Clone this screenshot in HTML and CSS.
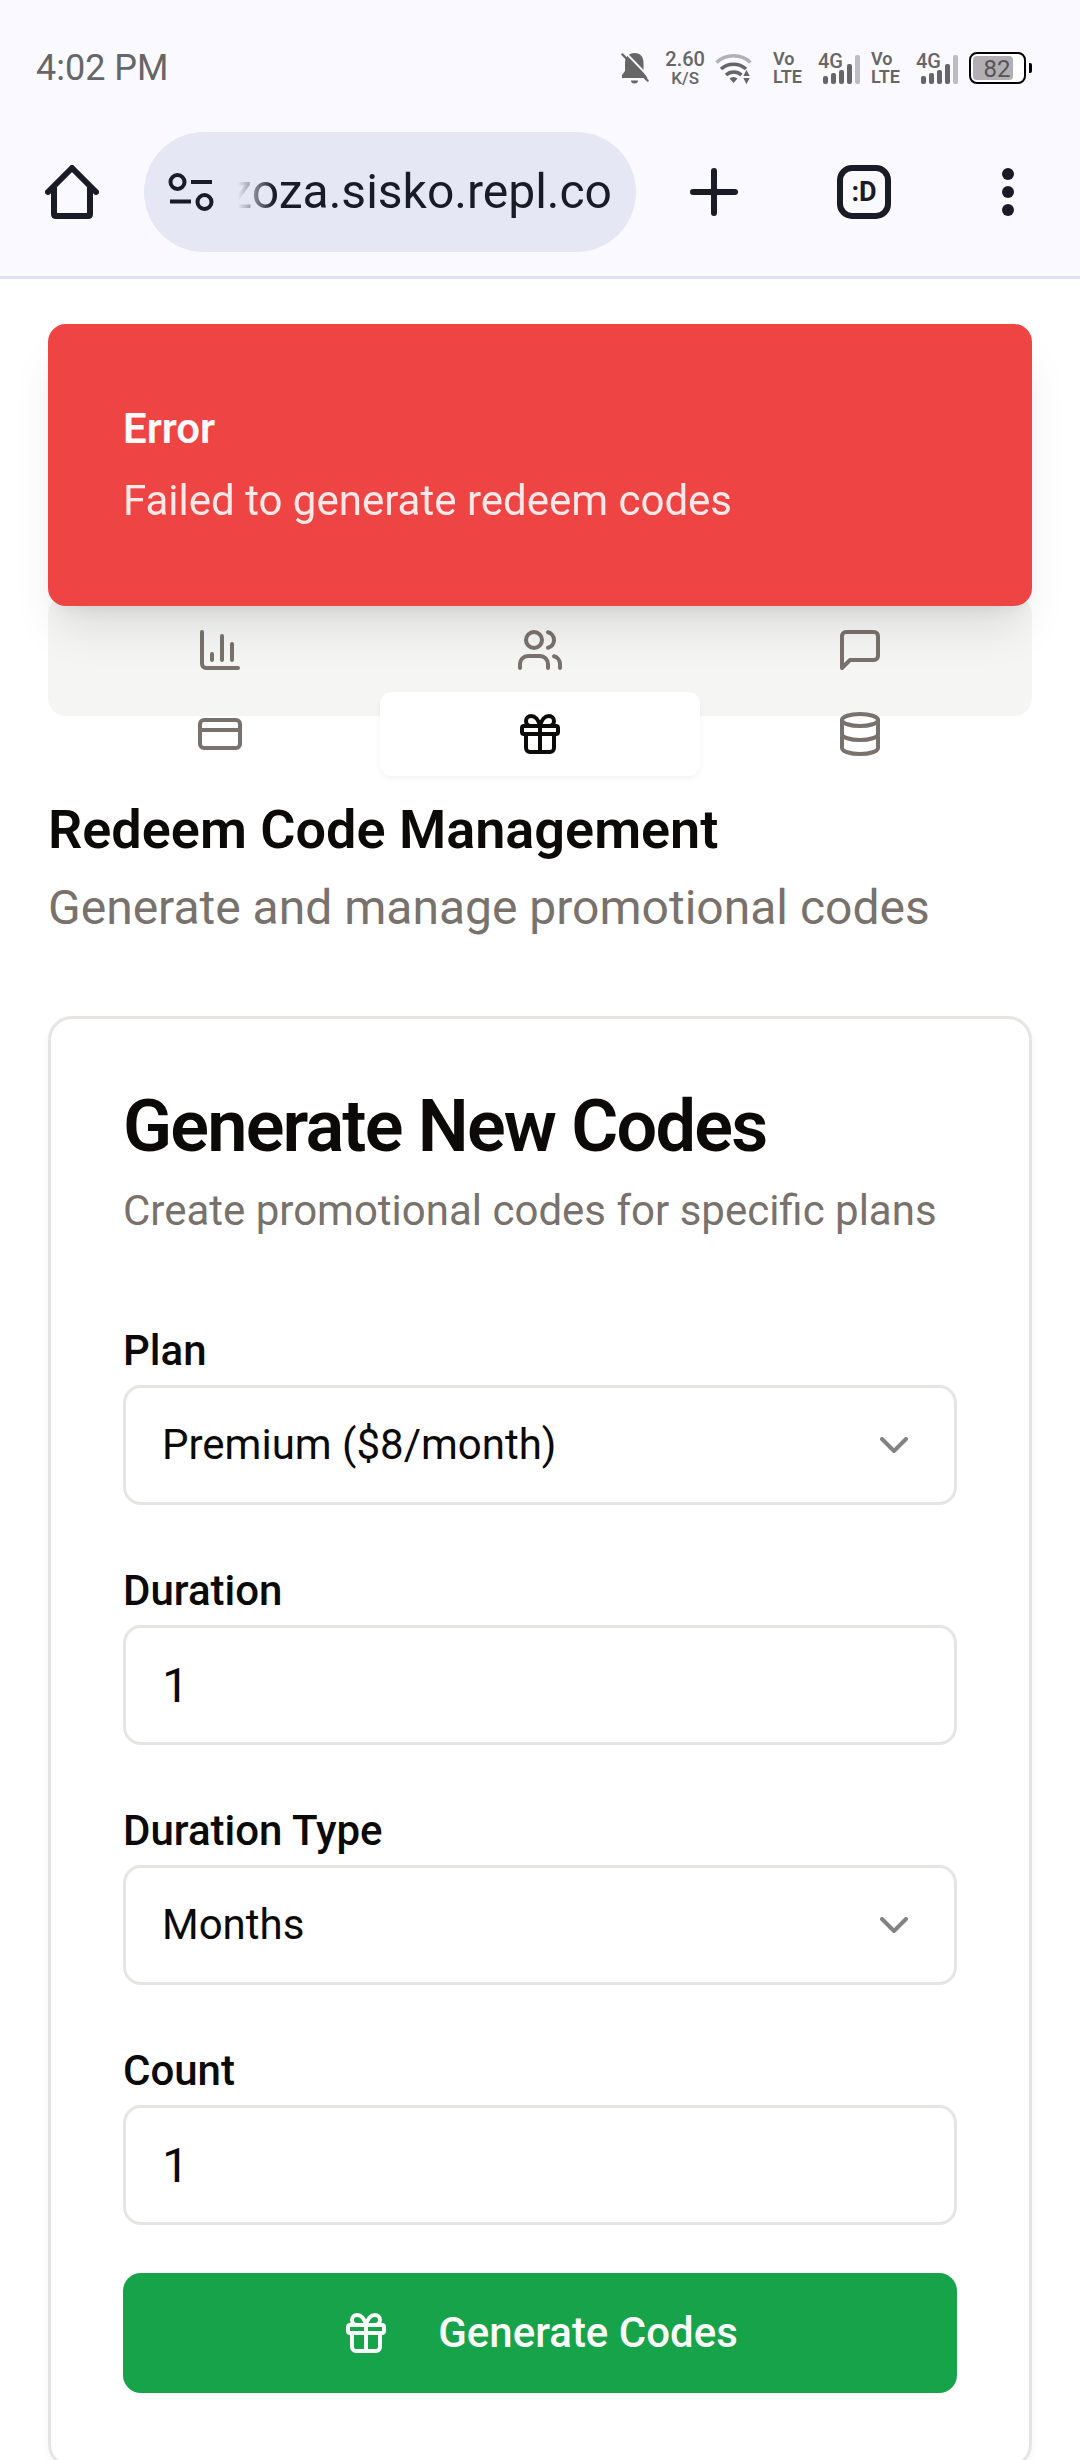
FILE: index.html
```html
<!DOCTYPE html>
<html lang="en">
<head>
<meta charset="utf-8">
<meta name="viewport" content="width=device-width, initial-scale=1">
<title>Redeem Code Management</title>
<link rel="stylesheet" href="styles.css">
</head>
<body>
<div class="screen">
  <header class="browser">
    <div class="status">
      <time class="clock">4:02 PM</time>
      <div class="status-icons">
        <svg class="bell" width="28" height="34" viewBox="0 0 28 34" fill="#666">
          <path d="M13.500 2c6 0 9 4 9 10v9l4 6H1v-3l3-4v-8c0-6 4-10 9.500-10z"/>
          <path d="M10 29.500h7a3.500 3 0 0 1-7 0z"/>
          <path d="M2 -1L30 28" stroke="#f9f9ff" stroke-width="2"/>
          <path d="M1.500 3.500L26.500 29.500" stroke="#666" stroke-width="2.500" stroke-linecap="round"/>
        </svg>
        <div class="speed"><span class="speed-value">2.60</span><span class="speed-unit">K/S</span></div>
        <svg class="wifi" width="38" height="34" viewBox="0 0 38 34" fill="none" stroke="#666" stroke-width="3.500">
          <path d="M1.500 11.500a25 25 0 0 1 34 0" stroke="#b1b0b6"/>
          <path d="M6 18a18.500 18.500 0 0 1 25 0"/>
          <path d="M11 24a11.500 11.500 0 0 1 15.500 0"/>
          <path d="M14.500 27.500a6 6 0 0 1 8 0L18.500 32z" fill="#666" stroke="none"/>
          <path d="M31.500 18l4 7.500h-8zM31.500 34l4-7.500h-8z" fill="#666" stroke="#f9f9ff" stroke-width="1"/>
        </svg>
        <div class="sim">
          <div class="volte"><span>Vo</span><span>LTE</span></div>
          <svg width="43" height="44" viewBox="0 -5 43 44" fill="#666">
            <text class="network" x="0" y="17">4G</text>
            <rect x="5" y="25" width="5" height="8" rx="2"/><rect x="13" y="22" width="5" height="11" rx="2"/><rect x="21" y="19" width="5" height="14" rx="2"/><rect x="29" y="13" width="5" height="20" rx="2"/><rect x="37" y="4" width="5" height="29" rx="2" fill="#bdbcc3"/>
          </svg>
        </div>
        <div class="sim">
          <div class="volte"><span>Vo</span><span>LTE</span></div>
          <svg width="43" height="44" viewBox="0 -5 43 44" fill="#666">
            <text class="network" x="0" y="17">4G</text>
            <rect x="5" y="25" width="5" height="8" rx="2"/><rect x="13" y="22" width="5" height="11" rx="2"/><rect x="21" y="19" width="5" height="14" rx="2"/><rect x="29" y="13" width="5" height="20" rx="2"/><rect x="37" y="4" width="5" height="29" rx="2" fill="#bdbcc3"/>
          </svg>
        </div>
        <svg width="63" height="34" viewBox="0 0 63 34">
          <rect x="1" y="2" width="55" height="30" rx="7" fill="#fff" stroke="#000" stroke-width="2"/>
          <rect x="4" y="5" width="40" height="24" rx="4" fill="#b1aeb4"/>
          <path d="M60 12h1a2 2 0 0 1 2 2v6a2 2 0 0 1-2 2h-1z"/>
          <text class="charge" x="28" y="26" text-anchor="middle">82</text>
        </svg>
      </div>
    </div>
    <div class="toolbar">
      <button class="tool" type="button" aria-label="Home">
        <svg width="54" height="54" viewBox="0 0 54 54" fill="none" stroke="#191b26" stroke-width="6" stroke-linecap="round" stroke-linejoin="round"><path d="M3 27L27 3l24 24M9 23v26q0 2 2 2h32q2 0 2-2V23"/></svg>
      </button>
      <div class="omnibox">
        <svg width="46" height="38" viewBox="0 0 46 38" fill="none" stroke="#191b26" stroke-width="4"><circle cx="9.500" cy="9" r="7"/><path d="M23 9h21M2 28.500h21"/><circle cx="36.500" cy="29" r="7"/></svg>
        <input class="address" type="text" value="zoza.sisko.repl.co" aria-label="Address">
      </div>
      <button class="tool new-tab" type="button" aria-label="New tab">
        <svg width="48" height="48" viewBox="0 0 48 48" stroke="#191b26" stroke-width="6" stroke-linecap="round"><path d="M24 3v42M3 24h42"/></svg>
      </button>
      <button class="tool" type="button" aria-label="Tabs"><span class="tab-count">:D</span></button>
      <button class="tool" type="button" aria-label="Menu">
        <svg width="12" height="48" viewBox="0 0 12 48" fill="#191b26"><circle cx="6" cy="6" r="6"/><circle cx="6" cy="24" r="6"/><circle cx="6" cy="42" r="6"/></svg>
      </button>
    </div>
  </header>

  <main class="page">
    <div class="toast" role="alert">
      <p class="toast-title">Error</p>
      <p class="toast-text">Failed to generate redeem codes</p>
    </div>

    <div class="tabs" role="tablist">
      <button class="tab" type="button" role="tab" aria-label="Analytics"><svg class="icon" viewBox="0 0 24 24"><path d="M3 3v16a2 2 0 0 0 2 2h16M18 17V9M13 17V5M8 17v-3"/></svg></button>
      <button class="tab" type="button" role="tab" aria-label="Users"><svg class="icon" viewBox="0 0 24 24"><path d="M16 21v-2a4 4 0 0 0-4-4H6a4 4 0 0 0-4 4v2"/><circle cx="9" cy="7" r="4"/><path d="M22 21v-2a4 4 0 0 0-3-3.870M16 3.130a4 4 0 0 1 0 7.750"/></svg></button>
      <button class="tab" type="button" role="tab" aria-label="Messages"><svg class="icon" viewBox="0 0 24 24"><path d="M21 15a2 2 0 0 1-2 2H7l-4 4V5a2 2 0 0 1 2-2h14a2 2 0 0 1 2 2z"/></svg></button>
      <button class="tab" type="button" role="tab" aria-label="Payments"><svg class="icon" viewBox="0 0 24 24"><rect x="2" y="5" width="20" height="14" rx="2"/><path d="M2 10h20"/></svg></button>
      <button class="tab tab-active" type="button" role="tab" aria-selected="true" aria-label="Redeem codes"><svg class="icon" viewBox="0 0 24 24"><rect x="3" y="8" width="18" height="4" rx="1"/><path d="M12 8v13M19 12v7a2 2 0 0 1-2 2H7a2 2 0 0 1-2-2v-7M7.500 8a2.500 2.500 0 0 1 0-5A4.800 8 0 0 1 12 8a4.800 8 0 0 1 4.500-5 2.500 2.500 0 0 1 0 5"/></svg></button>
      <button class="tab" type="button" role="tab" aria-label="Database"><svg class="icon" viewBox="0 0 24 24"><ellipse cx="12" cy="5" rx="9" ry="3"/><path d="M3 5V19A9 3 0 0 0 21 19V5M3 12A9 3 0 0 0 21 12"/></svg></button>
    </div>

    <section class="intro">
      <h1 class="intro-title">Redeem Code Management</h1>
      <p class="intro-text">Generate and manage promotional codes</p>
    </section>

    <section class="card">
      <div class="card-header">
        <h2 class="card-title">Generate New Codes</h2>
        <p class="card-text">Create promotional codes for specific plans</p>
      </div>
      <form class="form">
        <div class="field">
          <label for="plan">Plan</label>
          <div class="select">
            <select class="control" id="plan"><option>Premium ($8/month)</option></select>
            <svg class="icon chevron" viewBox="0 0 24 24"><path d="m6 9 6 6 6-6"/></svg>
          </div>
        </div>
        <div class="field">
          <label for="duration">Duration</label>
          <input class="control control-number" id="duration" type="number" value="1">
        </div>
        <div class="field">
          <label for="duration-type">Duration Type</label>
          <div class="select">
            <select class="control" id="duration-type"><option>Months</option></select>
            <svg class="icon chevron" viewBox="0 0 24 24"><path d="m6 9 6 6 6-6"/></svg>
          </div>
        </div>
        <div class="field">
          <label for="count">Count</label>
          <input class="control control-number" id="count" type="number" value="1">
        </div>
        <button class="submit" type="button">
          <svg class="icon" viewBox="0 0 24 24"><rect x="3" y="8" width="18" height="4" rx="1"/><path d="M12 8v13M19 12v7a2 2 0 0 1-2 2H7a2 2 0 0 1-2-2v-7M7.500 8a2.500 2.500 0 0 1 0-5A4.800 8 0 0 1 12 8a4.800 8 0 0 1 4.500-5 2.500 2.500 0 0 1 0 5"/></svg>
          Generate Codes
        </button>
      </form>
    </section>
  </main>
</div>
</body>
</html>
```
FILE: styles.css
```css
*, *::before, *::after { box-sizing: border-box; }

body, h1, h2, p { margin: 0; }

body {
  font-family: Roboto, "Liberation Sans", sans-serif;
  font-size: 48px;
  line-height: 72px;
  color: #0c0a09;
  background: #fff;
}

button, input, select { font: inherit; color: inherit; margin: 0; }

button { border: 0; padding: 0; background: none; }

svg { display: block; flex: none; }

.screen {
  display: flex;
  flex-direction: column;
  height: 100vh;
}

/* Browser chrome */

.browser {
  flex: none;
  background: #f9f9ff;
  border-bottom: 3px solid #dfe1ee;
}

.status {
  display: flex;
  align-items: center;
  justify-content: space-between;
  height: 108px;
  padding: 28px 48px 0 36px;
  color: #666;
}

.clock { font-size: 36px; line-height: 42px; }

.status-icons {
  display: flex;
  align-items: center;
  gap: 10px;
}

.bell { margin-right: 6px; }

.wifi { margin-right: 10px; }

.speed, .volte {
  display: flex;
  flex-direction: column;
  font-weight: 500;
}

.speed { align-items: center; }

.speed-value { font-size: 20px; line-height: 20px; }

.speed-unit { font-size: 17px; line-height: 18px; }

.volte {
  width: 28px;
  font-size: 18px;
  font-weight: 600;
  line-height: 18px;
}

.sim {
  display: flex;
  align-items: center;
  gap: 17px;
}

.network { font-size: 20px; font-weight: 500; }

.charge { font-size: 24px; fill: #555; }

.toolbar {
  display: flex;
  align-items: center;
  height: 168px;
  color: #191b26;
}

.tool {
  display: flex;
  align-items: center;
  justify-content: center;
  flex: none;
  width: 144px;
  height: 144px;
}

.new-tab { margin: 0 6px; }

.omnibox {
  display: flex;
  align-items: center;
  flex: 1;
  gap: 24px;
  min-width: 0;
  height: 120px;
  padding: 0 24px;
  border-radius: 60px;
  background: #e5e7f4;
}

.address {
  flex: 1;
  min-width: 0;
  padding: 0;
  border: 0;
  outline: 0;
  background: none;
  direction: rtl;
  mask-image: linear-gradient(to right, transparent, #000 36px);
}

.tab-count {
  width: 54px;
  height: 54px;
  border: 6px solid;
  border-radius: 15px;
  font-size: 27px;
  font-weight: 700;
  line-height: 42px;
}

/* Page */

.page {
  flex: 1;
  min-height: 0;
  padding: 45px 48px;
  overflow-y: auto;
  scrollbar-width: none;
}

.toast {
  position: relative;
  display: flex;
  flex-direction: column;
  gap: 12px;
  padding: 72px;
  border: 3px solid #ef4444;
  border-radius: 18px;
  background: #ef4444;
  box-shadow: 0 30px 45px -9px rgb(0 0 0 / 10%), 0 12px 18px -12px rgb(0 0 0 / 10%);
  color: #fafaf9;
  font-size: 42px;
  line-height: 60px;
}

.toast-title { font-weight: 600; }

.toast-text { opacity: 0.9; }

/* The second row of tabs spills below the grey strip. */
.tabs {
  display: grid;
  grid-template-columns: repeat(3, 1fr);
  align-content: start;
  height: 120px;
  margin-top: -10px;
  padding: 12px;
  border-radius: 18px;
  background: #f5f5f4;
  color: #78716c;
}

.tab {
  display: flex;
  align-items: center;
  justify-content: center;
  height: 84px;
  border-radius: 12px;
}

.tab-active {
  background: #fff;
  color: #0c0a09;
  box-shadow: 0 3px 6px rgb(0 0 0 / 5%);
}

.icon {
  width: 48px;
  height: 48px;
  fill: none;
  stroke: currentColor;
  stroke-width: 2;
  stroke-linecap: round;
  stroke-linejoin: round;
}

.intro { margin: 72px 0; }

.intro-title {
  font-size: 54px;
  font-weight: 600;
  line-height: 84px;
}

.intro-text { color: #78716c; }

.card {
  padding: 72px;
  border: 3px solid #e7e5e4;
  border-radius: 24px;
  box-shadow: 0 3px 6px rgb(0 0 0 / 5%);
}

.card-header {
  display: flex;
  flex-direction: column;
  gap: 18px;
  margin-bottom: 72px;
}

.card-title {
  font-size: 72px;
  font-weight: 600;
  line-height: 72px;
  letter-spacing: -0.025em;
}

.card-text {
  color: #78716c;
  font-size: 42px;
  line-height: 60px;
}

.form {
  display: flex;
  flex-direction: column;
  gap: 48px;
}

.field label {
  font-size: 42px;
  font-weight: 500;
  line-height: 42px;
}

.select {
  display: grid;
  align-items: center;
}

.select > * { grid-area: 1 / 1; }

.control {
  display: block;
  width: 100%;
  height: 120px;
  padding: 0 36px;
  border: 3px solid #e7e5e4;
  border-radius: 18px;
  background: #fff;
  font-size: 42px;
  line-height: 60px;
  appearance: none;
}

.control-number { font-size: 48px; appearance: textfield; }

.chevron {
  justify-self: end;
  margin-right: 39px;
  opacity: 0.5;
  pointer-events: none;
}

.submit {
  display: flex;
  align-items: center;
  justify-content: center;
  gap: 48px;
  height: 120px;
  border-radius: 18px;
  background: #16a34a;
  color: #fafaf9;
  font-size: 42px;
  font-weight: 500;
}
```
